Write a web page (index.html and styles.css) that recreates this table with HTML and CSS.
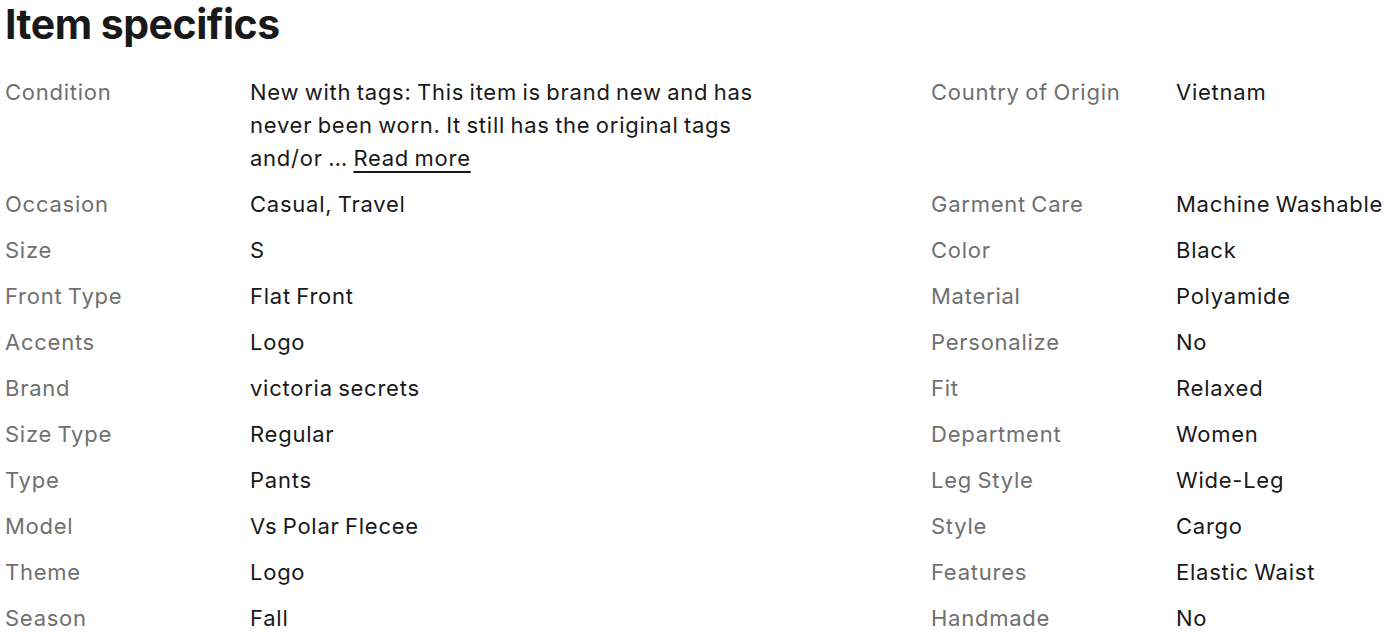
FILE: index.html
```html
<!DOCTYPE html>
<html>
<head>
<meta charset="utf-8">
<link rel="stylesheet" href="styles.css">
</head>
<body>
<section class="specs">
  <h2 class="title">Item specifics</h2>
  <div class="grid">
    <div class="col">
      <div class="row"><div class="label">Condition</div><div class="value cond">New with tags: This item is brand new and has never been worn. It still has the original tags and/or … <span class="more">Read more</span></div></div>
      <div class="row"><div class="label">Occasion</div><div class="value">Casual, Travel</div></div>
      <div class="row"><div class="label">Size</div><div class="value">S</div></div>
      <div class="row"><div class="label">Front Type</div><div class="value">Flat Front</div></div>
      <div class="row"><div class="label">Accents</div><div class="value">Logo</div></div>
      <div class="row"><div class="label">Brand</div><div class="value">victoria secrets</div></div>
      <div class="row"><div class="label">Size Type</div><div class="value">Regular</div></div>
      <div class="row"><div class="label">Type</div><div class="value">Pants</div></div>
      <div class="row"><div class="label">Model</div><div class="value">Vs Polar Flecee</div></div>
      <div class="row"><div class="label">Theme</div><div class="value">Logo</div></div>
      <div class="row"><div class="label">Season</div><div class="value">Fall</div></div>
    </div>
    <div class="col">
      <div class="row tall"><div class="label">Country of Origin</div><div class="value">Vietnam</div></div>
      <div class="row"><div class="label">Garment Care</div><div class="value">Machine Washable</div></div>
      <div class="row"><div class="label">Color</div><div class="value">Black</div></div>
      <div class="row"><div class="label">Material</div><div class="value">Polyamide</div></div>
      <div class="row"><div class="label">Personalize</div><div class="value">No</div></div>
      <div class="row"><div class="label">Fit</div><div class="value">Relaxed</div></div>
      <div class="row"><div class="label">Department</div><div class="value">Women</div></div>
      <div class="row"><div class="label">Leg Style</div><div class="value">Wide-Leg</div></div>
      <div class="row"><div class="label">Style</div><div class="value">Cargo</div></div>
      <div class="row"><div class="label">Features</div><div class="value">Elastic Waist</div></div>
      <div class="row"><div class="label">Handmade</div><div class="value">No</div></div>
    </div>
  </div>
</section>
</body>
</html>
```
FILE: styles.css
```css
html, body {
  margin: 0;
  padding: 0;
  background: #ffffff;
}
body {
  font-family: Inter, "Liberation Sans", sans-serif;
  color: #191919;
  overflow: hidden;
}
.specs {
  padding-left: 5px;
}
.title {
  margin: 0;
  font-size: 41px;
  font-weight: 700;
  line-height: 48px;
  letter-spacing: -0.5px;
  color: #191919;
}
.grid {
  display: flex;
  margin-top: 28px;
}
.col {
  display: flex;
  flex-direction: column;
  gap: 13px;
}
.col:first-child {
  width: 926px;
}
.row {
  display: flex;
  font-size: 22px;
  line-height: 33px;
  letter-spacing: 0.75px;
  word-spacing: -1.5px;
}
.row.tall {
  height: 99px;
}
.label {
  width: 245px;
  flex: none;
  color: #707070;
}
.value {
  color: #191919;
}
.cond {
  width: 530px;
}
.more {
  text-decoration: underline;
  text-underline-offset: 5px;
  text-decoration-thickness: 2px;
}
```
